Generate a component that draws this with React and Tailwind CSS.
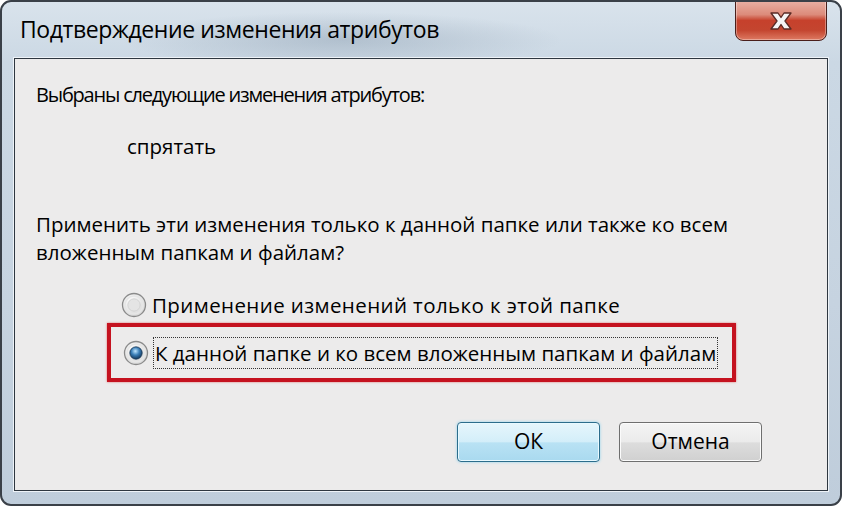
import React from "react";

function Radio({ checked }) {
  return (
    <svg width="26" height="26" viewBox="0 0 26 26" className="shrink-0">
      <defs>
        <radialGradient id="rIn" cx="0.4" cy="0.35" r="0.7">
          <stop offset="0" stopColor="#ffffff" />
          <stop offset="1" stopColor="#d6d6d6" />
        </radialGradient>
        <radialGradient id="rDot" cx="0.45" cy="0.35" r="0.7">
          <stop offset="0" stopColor="#bfe6ff" />
          <stop offset="0.45" stopColor="#3b7fb8" />
          <stop offset="1" stopColor="#0c2a4a" />
        </radialGradient>
      </defs>
      <circle cx="13" cy="13" r="11.5" fill="url(#rIn)" stroke="#8a8a8a" strokeWidth="1.3" />
      <circle cx="13" cy="13" r="9" fill="none" stroke="#e6e6e6" strokeWidth="1.5" />
      {checked ? (
        <circle cx="13" cy="13" r="6.2" fill="url(#rDot)" stroke="#1d3a57" strokeWidth="0.8" />
      ) : (
        <circle cx="13" cy="13" r="6.2" fill="#e4e4e4" stroke="#cdcdcd" strokeWidth="0.8" />
      )}
    </svg>
  );
}

export default function App() {
  const font = { fontFamily: '"Open Sans", "Noto Sans", "DejaVu Sans", sans-serif' };
  return (
    <div className="w-[842px] h-[506px] bg-white" style={font}>
      <div className="relative w-full h-full rounded-[11px] border-2 border-[#3a4048] bg-[radial-gradient(ellipse_220px_28px_at_340px_38px,rgba(120,140,160,0.35),transparent),linear-gradient(180deg,#d9e3ec_0%,#cbd8e4_12%,#c6d3e0_60%,#bfcddb_100%)] flex flex-col overflow-hidden">
        {/* title bar */}
        <div className="h-[56px] flex items-start justify-between shrink-0">
          <div className="pt-[12px] pl-[18px] text-[23px] leading-[30px] text-black tracking-[-0.4px]">
            Подтверждение изменения атрибутов
          </div>
          <div className="mr-[13px] mt-[-2px] w-[92px] h-[41px] rounded-b-[8px] border border-[#4a1f1b] bg-[linear-gradient(180deg,#e9b0a4_0%,#dc8b7a_35%,#c6412c_50%,#c4452f_75%,#dd7a62_100%)] shadow-[inset_0_0_0_1px_rgba(255,255,255,0.35)] flex items-center justify-center">
            <svg width="30" height="22" viewBox="0 0 30 22">
              <path d="M5 3 L12 3 L15 7.5 L18 3 L25 3 L19 11 L25 19 L18 19 L15 14.5 L12 19 L5 19 L11 11 Z" fill="#f4f4f4" stroke="#5a2a24" strokeWidth="1.3" strokeLinejoin="round" />
            </svg>
          </div>
        </div>
        {/* client */}
        <div className="flex-1 mx-[12px] mb-[13px] border border-[#2e3740] shadow-[0_0_0_1px_#eef3f8] bg-[#ecebeb] flex flex-col text-[20.5px] text-black">
          <div className="pl-[21px] pt-[23px] leading-[26px] text-[20px] tracking-[-1.2px]">Выбраны следующие изменения атрибутов:</div>
          <div className="pl-[112px] pt-[25px] leading-[26px]">спрятать</div>
          <div className="pl-[21px] pt-[51px] leading-[28px]">
            <div>Применить эти изменения только к данной папке или также ко всем</div>
            <div>вложенным папкам и файлам?</div>
          </div>
          <div className="pl-[106px] pt-[26px] flex items-center gap-[5px] leading-[26px]">
            <Radio checked={false} />
            <span className="tracking-[0.4px]">Применение изменений только к этой папке</span>
          </div>
          <div className="ml-[92px] mt-[5px] w-[629px] h-[59px] border-[4px] border-[#c5121f] shadow-[0_0_2px_#e07070] flex items-center pl-[12px] gap-[4px]">
            <Radio checked={true} />
            <span className="border border-dotted border-[#333] px-[1px] leading-[30px]">К данной папке и ко всем вложенным папкам и файлам</span>
          </div>
          <div className="flex-1" />
          <div className="flex justify-end gap-[19px] pr-[65px] pb-[28px]">
            <button className="w-[143px] h-[40px] rounded-[4px] border border-[#2c6d8c] bg-[linear-gradient(180deg,#e6f6fc_0%,#d3eef9_50%,#b9e2f4_52%,#a9d9ef_100%)] shadow-[inset_0_0_0_1px_#e8f9ff,0_0_3px_#8fd3ee] text-[21px]">ОК</button>
            <button className="w-[143px] h-[40px] rounded-[4px] border border-[#6f6f6f] bg-[linear-gradient(180deg,#f4f4f4_0%,#ebebeb_50%,#dddddd_52%,#d0d0d0_100%)] shadow-[inset_0_0_0_1px_#fbfbfb] text-[21px]">Отмена</button>
          </div>
        </div>
      </div>
    </div>
  );
}
